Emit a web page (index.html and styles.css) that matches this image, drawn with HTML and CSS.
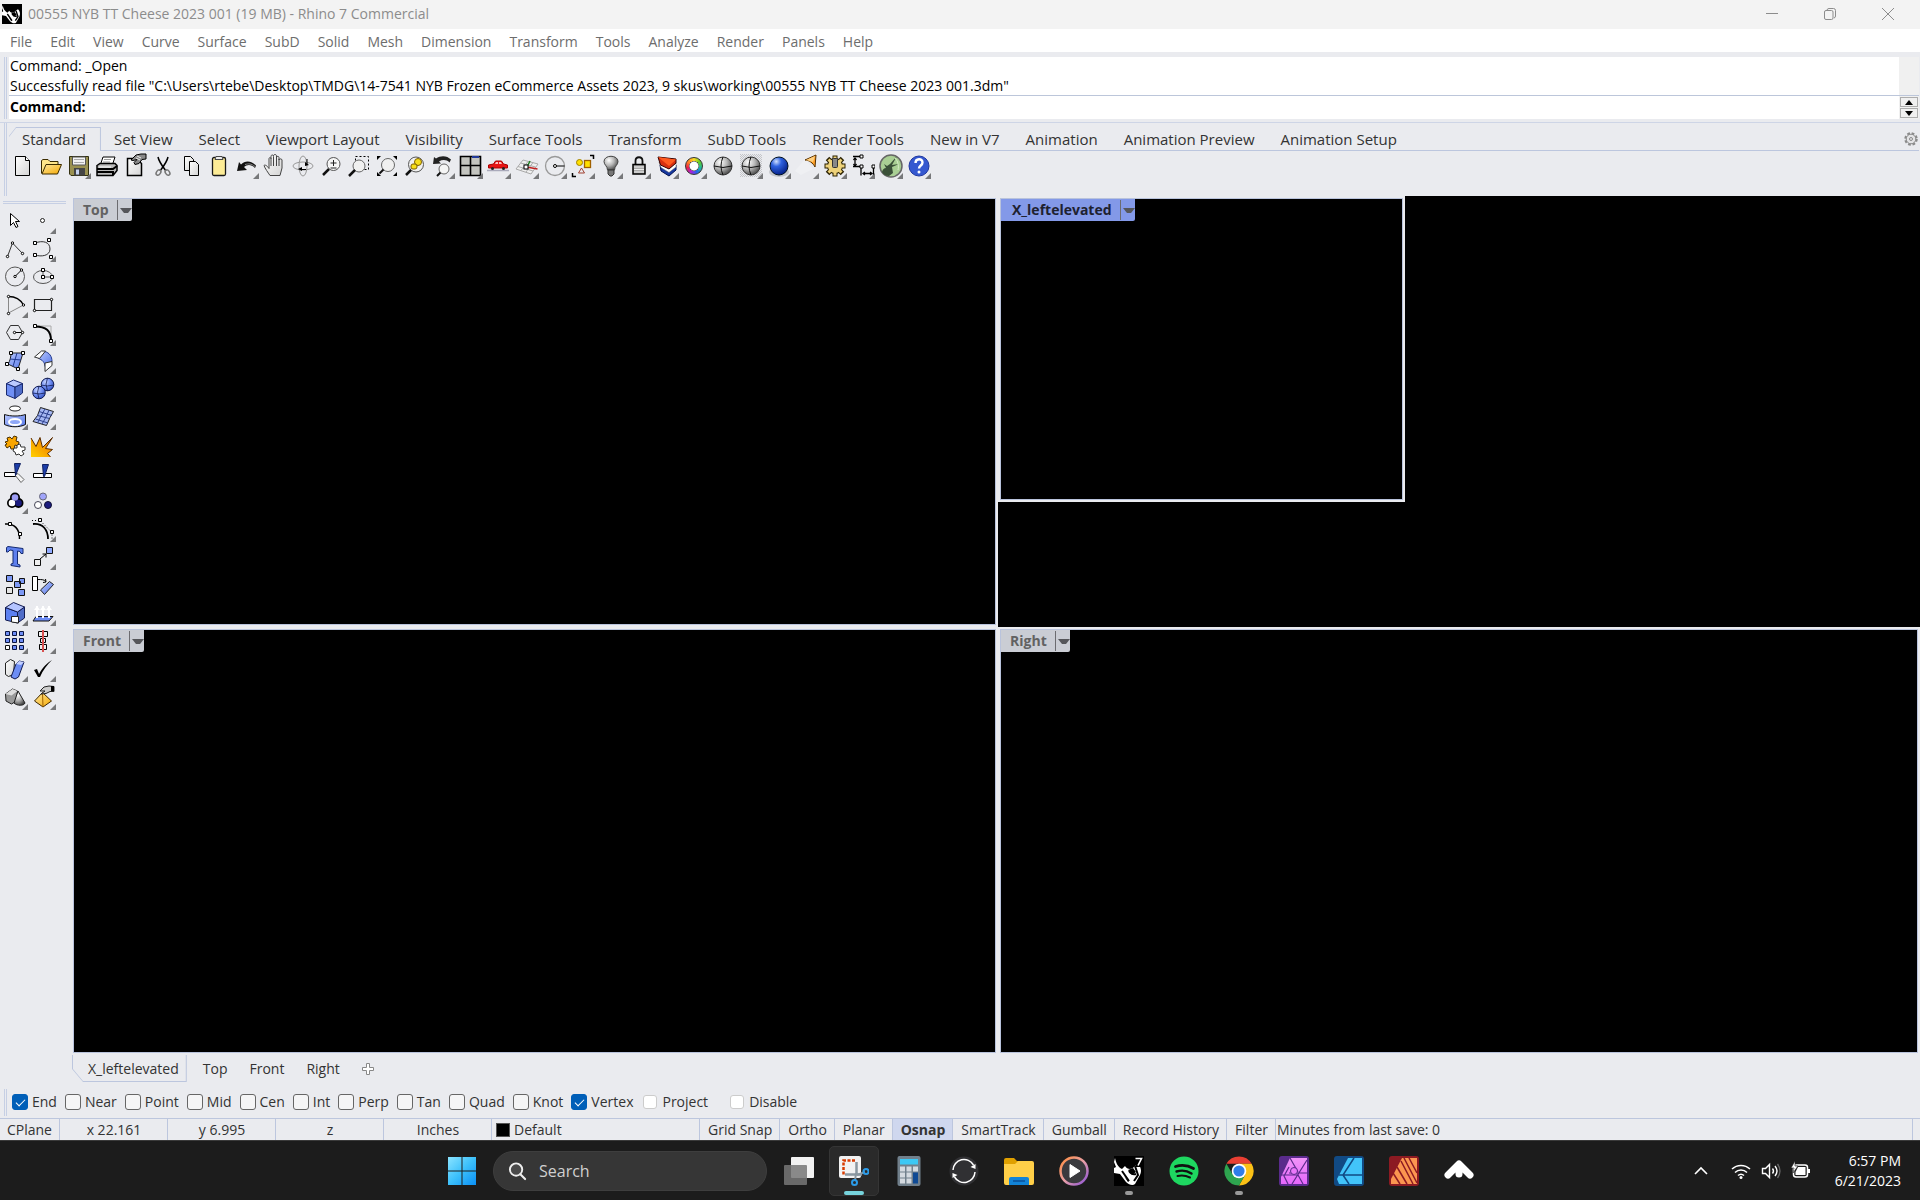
FILE: index.html
```html
<!DOCTYPE html>
<html lang="en">
<head>
    <meta charset="UTF-8">
    <meta name="viewport" content="width=device-width, initial-scale=1.0">
    <title>00555 NYB TT Cheese 2023 001 (19 MB) - Rhino 7 Commercial</title>
    <link rel="stylesheet" href="styles.css">
</head>
<body>
    <!-- shared gradients and symbols -->
    <svg class="defs" width="0" height="0" aria-hidden="true">
        <defs>
            <linearGradient id="g-paper" x1="0" y1="0" x2="1" y2="1"><stop offset="0" stop-color="#fff"/><stop offset="1" stop-color="#d4d4d4"/></linearGradient>
            <linearGradient id="g-blue" x1="0" y1="0" x2="1" y2="1"><stop offset="0" stop-color="#b9c8ff"/><stop offset="1" stop-color="#5577e8"/></linearGradient>
            <linearGradient id="g-gold" x1="0" y1="0" x2="1" y2="1"><stop offset="0" stop-color="#ffe9a0"/><stop offset="1" stop-color="#f5a800"/></linearGradient>
            <linearGradient id="g-fire" x1="0" y1="1" x2="1" y2="0"><stop offset="0" stop-color="#ffd000"/><stop offset="1" stop-color="#f07000"/></linearGradient>
            <radialGradient id="g-grey" cx=".35" cy=".3" r=".75"><stop offset="0" stop-color="#fff"/><stop offset=".5" stop-color="#b5b5b5"/><stop offset="1" stop-color="#444"/></radialGradient>
            <radialGradient id="g-ball" cx=".35" cy=".25" r=".8"><stop offset="0" stop-color="#cfe0ff"/><stop offset=".35" stop-color="#2f62e0"/><stop offset="1" stop-color="#001a80"/></radialGradient>
            <radialGradient id="g-sph" cx=".35" cy=".3" r=".8"><stop offset="0" stop-color="#c4d2ff"/><stop offset=".5" stop-color="#6f8df2"/><stop offset="1" stop-color="#2a48b8"/></radialGradient>
            <linearGradient id="g-win" x1="0" y1="0" x2="1" y2="1"><stop offset="0" stop-color="#8be4ff"/><stop offset=".5" stop-color="#3cc0fb"/><stop offset="1" stop-color="#0a8ff5"/></linearGradient>
            <linearGradient id="g-ring" x1="0" y1="0" x2="1" y2="1"><stop offset="0" stop-color="#ff8c3a"/><stop offset=".5" stop-color="#e8a0a8"/><stop offset="1" stop-color="#8a50d8"/></linearGradient>
            <linearGradient id="g-pink" x1="0" y1="0" x2="0" y2="1"><stop offset="0" stop-color="#f094f8"/><stop offset="1" stop-color="#e667fb"/></linearGradient>
            <pattern id="p-dots" width="2" height="2" patternUnits="userSpaceOnUse"><path d="M0 0h1v1H0zM1 1h1v1H1z" fill="#c4c5c9"/></pattern>
            <symbol id="rhino" viewBox="0 0 30 30">
                <path d="M0 0h30v30H0z" fill="#000"/>
                <path d="M1 2c1 5 3 9 7 11l3-3c1 2 3 3 5 3 3 0 4-3 8-5 3 3 4 7 2 11l-5 9c-2 2-6 1-9-2L6 18 0 17v-5l2-1-2-5z" fill="#fff"/>
                <path d="M8 15l7 10M15 15c2 3 4 4 7 3M21 10l3 9-4 6" fill="none" stroke="#000" stroke-width="2"/>
                <path d="M14 14l5-2 3 4-4 3zM10 20l5 5-1 1z" fill="#000"/>
            </symbol>
        </defs>
    </svg>

    <header class="titlebar">
        <svg class="app-icon" viewBox="0 0 30 30"><use href="#rhino"/></svg>
        <span class="title">00555 NYB TT Cheese 2023 001 (19 MB) - Rhino 7 Commercial</span>
        <div class="window-buttons">
            <button aria-label="Minimize"><svg viewBox="0 0 14 14"><path d="M1 6.500h12"/></svg></button>
            <button aria-label="Restore"><svg viewBox="0 0 14 14"><rect x="1.500" y="3.500" width="8.500" height="9" rx="1.500"/><path d="M4 3.500V3a2 2 0 0 1 2-1.500h4.500a2 2 0 0 1 2 2V9a2 2 0 0 1-1.500 2"/></svg></button>
            <button aria-label="Close"><svg viewBox="0 0 14 14"><path d="M1 1l12 12M13 1L1 13"/></svg></button>
        </div>
    </header>

    <nav class="menubar">
        <button>File</button><button>Edit</button><button>View</button><button>Curve</button><button>Surface</button><button>SubD</button><button>Solid</button><button>Mesh</button><button>Dimension</button><button>Transform</button><button>Tools</button><button>Analyze</button><button>Render</button><button>Panels</button><button>Help</button>
    </nav>

    <section class="command-area">
        <div class="command-box">
            <div class="history">
                <p>Command: _Open</p>
                <p>Successfully read file "C:\Users\rtebe\Desktop\TMDG\14-7541 NYB Frozen eCommerce Assets 2023, 9 skus\working\00555 NYB TT Cheese 2023 001.3dm"</p>
            </div>
            <div class="prompt">
                <label for="command">Command:</label>
                <input type="text" id="command">
                <div class="spinner">
                    <button aria-label="Previous"><svg viewBox="0 0 8 5"><path d="M4 0l4 5H0z"/></svg></button>
                    <button aria-label="Next"><svg viewBox="0 0 8 5"><path d="M0 0h8L4 5z"/></svg></button>
                </div>
            </div>
        </div>
    </section>

    <section class="toolbar-area">
        <div class="tool-tabs">
            <button class="active"><span>Standard</span></button><button>Set View</button><button>Select</button><button>Viewport Layout</button><button>Visibility</button><button>Surface Tools</button><button>Transform</button><button>SubD Tools</button><button>Render Tools</button><button>New in V7</button><button>Animation</button><button>Animation Preview</button><button>Animation Setup</button>
            <button class="options" aria-label="Options"><svg viewBox="0 0 16 16"><circle cx="8" cy="8" r="5.500" fill="none" stroke="#8a8a8a" stroke-width="2.500" stroke-dasharray="2.600 1.720"/><circle cx="8" cy="8" r="4.800" fill="#e4e4e6" stroke="#8a8a8a"/><circle cx="8" cy="8" r="1.500" fill="none" stroke="#8a8a8a"/></svg></button>
        </div>
        <div class="tools">
            <button class="tool" aria-label="New"><svg viewBox="0 0 28 28"><path d="M8.500 5.500h10l4 4v15h-14z" fill="url(#g-paper)" stroke="#000"/><path d="M18.500 5.500v4h4" fill="#fff" stroke="#000"/></svg></button>
            <button class="tool" aria-label="Open"><svg viewBox="0 0 28 28"><path d="M6.500 22.500v-13l1.500-1h5l2 2h8v3" fill="#ffe68a" stroke="#3a2a00"/><path d="M7 23l4-9.500h15.500l-4 9.500z" fill="url(#g-gold)" stroke="#3a2a00"/></svg></button>
            <button class="tool more" aria-label="Save"><svg viewBox="0 0 28 28"><path d="M6.500 5.500h19v19H8l-1.500-1.500z" fill="#9a9150" stroke="#333010"/><path d="M9.500 6h13v8h-13z" fill="#f2f2f2" stroke="#555"/><path d="M11 8.500h10M11 11.500h10" stroke="#aaa"/><path d="M11 17h11v7.500H11z" fill="#444"/><path d="M13 18.500h3v5h-3z" fill="#c8d4f0"/></svg></button>
            <button class="tool" aria-label="Print"><svg viewBox="0 0 28 28"><path d="M12 6h12l-3 9H9z" fill="#fff" stroke="#000"/><path d="M13 8.500h7M12 11h7" stroke="#999"/><path d="M6 14.500l3-2h15l2 2v5l-4 5H6z" fill="#bbb" stroke="#000" stroke-width="1.500"/><path d="M6 18h16l4-3M6 21h16v3" fill="none" stroke="#000" stroke-width="2"/><path d="M8 16h12" stroke="#fff"/></svg></button>
            <button class="tool" aria-label="Document properties"><svg viewBox="0 0 28 28"><path d="M8.500 7.500h9l5 5v12h-14z" fill="url(#g-paper)" stroke="#000" stroke-width="1.500"/><path d="M12 9l5-5 5-1h5v5l-4 .5-3 4-4 1-1-2 3-3-4 1z" fill="#888" stroke="#000"/><path d="M18 5l4 2M17 7l4 2" stroke="#eee"/></svg></button>
            <button class="tool" aria-label="Cut"><svg viewBox="0 0 28 28"><path d="M11 6c1 5 5 10 8 14M21 6c-1 5-5 10-8 14" fill="none" stroke="#000" stroke-width="1.500"/><ellipse cx="11.500" cy="21.500" rx="2" ry="3" transform="rotate(35 11.500 21.500)" fill="none" stroke="#777" stroke-width="1.500"/><ellipse cx="20.500" cy="21.500" rx="2" ry="3" transform="rotate(-35 20.500 21.500)" fill="none" stroke="#777" stroke-width="1.500"/></svg></button>
            <button class="tool" aria-label="Copy"><svg viewBox="0 0 28 28"><path d="M9.500 5.500h6l3 3v11h-9z" fill="url(#g-paper)" stroke="#000"/><path d="M14.500 10.500h6l3 3v11h-9z" fill="url(#g-paper)" stroke="#000"/></svg></button>
            <button class="tool" aria-label="Paste"><svg viewBox="0 0 28 28"><rect x="9.500" y="6.500" width="13" height="18" rx="1.500" fill="#fdec96" stroke="#1a1a1a" stroke-width="1.300"/><path d="M12 8.500l1-3h6l1 3z" fill="#eee" stroke="#444"/></svg></button>
            <button class="tool more" aria-label="Undo"><svg viewBox="0 0 28 28"><path d="M6 20l2-9 2 2.500c4-4 10-4 15 1l-1 2.500c-4-4-8-3.500-11-1l3 3z" fill="#111"/><path d="M14 13.500c4-1 6-1 10 2" fill="none" stroke="#888"/></svg></button>
            <button class="tool" aria-label="Pan"><svg viewBox="0 0 28 28"><path d="M11 24.500c-2-3-5-7-6-10 1-1 3 0 5 3V8c0-2 2-2 2 0V5.500c0-2 2.500-2 2.500 0V5c0-2 3-2 3 0v1.500c0-1.500 2.500-1.500 2.500 0V9c0-1.500 3-1.500 3 0v8l-2 7.500z" fill="url(#g-paper)" stroke="#444"/><path d="M12 8v7M14.500 6v9M17.500 6v9M20 8v7" stroke="#444"/></svg></button>
            <button class="tool" aria-label="Rotate view"><svg viewBox="0 0 28 28"><g fill="none" stroke="#999"><ellipse cx="16" cy="15" rx="10" ry="4"/><ellipse cx="16" cy="15" rx="4" ry="10"/></g><path d="M11 18l4-2v4zM18 11l4 3-4 1z" fill="#000"/><path d="M15 18.500h4M20 8v5" stroke="#000"/></svg></button>
            <button class="tool" aria-label="Zoom dynamic"><svg viewBox="0 0 28 28"><circle cx="18.500" cy="13" r="6.500" fill="#f5f5f5" stroke="#555"/><path d="M14 18l-6 6" stroke="#111" stroke-width="2.500"/><path d="M15.500 12h6M18.500 9v6M15.500 17h6" stroke="#222"/></svg></button>
            <button class="tool" aria-label="Zoom window"><svg viewBox="0 0 28 28"><path d="M12.500 5.500h13v13h-13z" fill="none" stroke="#000" stroke-dasharray="2 2"/><circle cx="16" cy="15" r="6" fill="#f0f0f0" stroke="#666"/><path d="M12 19l-6 6" stroke="#111" stroke-width="2.500"/></svg></button>
            <button class="tool" aria-label="Zoom extents"><svg viewBox="0 0 28 28"><circle cx="17" cy="14" r="6.500" fill="#f0f0f0" stroke="#666"/><path d="M12.500 18.500l-4 4" stroke="#111" stroke-width="2"/><path d="M6 5h4l-4 4zM26 5h-4l4 4zM6 25h4l-4-4zM26 25h-4l4-4z"/></svg></button>
            <button class="tool" aria-label="Zoom selected"><svg viewBox="0 0 28 28"><circle cx="17" cy="13.500" r="7.500" fill="#f0f0f0" stroke="#555"/><circle cx="19" cy="11" r="3.500" fill="#f7df1c" stroke="#806000"/><rect x="12" y="13" width="6" height="5" rx="2" fill="#f7df1c" stroke="#806000"/><path d="M12 19l-5 5" stroke="#111" stroke-width="2.500"/></svg></button>
            <button class="tool more" aria-label="Undo view change"><svg viewBox="0 0 28 28"><path d="M6 13l1-7 2 1.500c5-3.500 11-3 15 1l-1.500 3c-3-3-7-3-10.500-1l2 2z" fill="#222"/><circle cx="17" cy="18" r="5" fill="#f5f5f5" stroke="#666"/><path d="M13.500 21.500L10 25" stroke="#111" stroke-width="2"/></svg></button>
            <button class="tool more" aria-label="Four viewports"><svg viewBox="0 0 28 28"><path d="M5.500 5.500h20v19h-20zM15.500 5.500v19M5.500 14.500h20" fill="#c3c4bf" stroke="#000" stroke-width="1.600"/><path d="M17 6h7" stroke="#223a9a" stroke-width="2"/></svg></button>
            <button class="tool more" aria-label="Set view"><svg viewBox="0 0 28 28"><path d="M4 19.500h22" stroke="#aab" stroke-width="1.500"/><path d="M5.500 17v-3l5-1 2-3h6l2 3 4 1v3z" fill="#e81414" stroke="#a00"/><path d="M13 11h2v2h-3zM16 11h2l1 2h-3z" fill="#fbb"/><circle cx="9.500" cy="17.500" r="1.500" fill="#222"/><circle cx="20.500" cy="17.500" r="1.500" fill="#222"/></svg></button>
            <button class="tool more" aria-label="Set CPlane"><svg viewBox="0 0 28 28"><path d="M5 18l7-9 15 4-7 10zM7 15.500l15 4.500M9.500 12l15 4M10 19.500l7-9M15 21l7-9.500" fill="#efefef" stroke="#aaa"/><path d="M15.500 16l11 2" stroke="#c02020" stroke-width="1.500"/><path d="M16 16l3-6" stroke="#208020" stroke-width="1.500"/><rect x="13" y="14" width="4" height="4" fill="#fff" stroke="#000"/></svg></button>
            <button class="tool more" aria-label="Circle"><svg viewBox="0 0 28 28"><circle cx="16" cy="15" r="9.500" fill="none" stroke="#999" stroke-width="1.300"/><path d="M16 15h9.500" stroke="#000"/><circle cx="16" cy="15" r="1.500" fill="#fff" stroke="#000"/></svg></button>
            <button class="tool more" aria-label="Object snap"><svg viewBox="0 0 28 28"><circle cx="12.500" cy="11.500" r="3" fill="#ffe000" stroke="#a08000"/><rect x="17.500" y="9.500" width="6" height="7" fill="#ffe000" stroke="#a06000" stroke-width="1.300"/><path d="M14.500 17l3 5h-6z" fill="none" stroke="#a04030"/><path d="M23 4.500h3.500V8M5.500 22v3.500H9" fill="none" stroke="#000" stroke-width="1.500"/></svg></button>
            <button class="tool more" aria-label="Lights"><svg viewBox="0 0 28 28"><path d="M12.500 19c0-4-3.500-5-3.500-8.500 0-7 14-7 14 0 0 3.500-3.500 4.500-3.500 8.500z" fill="url(#g-grey)" stroke="#444"/><path d="M13 19h6v4l-2 2h-2l-2-2z" fill="#777" stroke="#333"/></svg></button>
            <button class="tool more" aria-label="Lock"><svg viewBox="0 0 28 28"><path d="M12.500 14v-4c0-5 7-5 7 0v4" fill="none" stroke="#111" stroke-width="1.800"/><rect x="10" y="13.500" width="12" height="9.500" fill="#aaa" stroke="#000" stroke-width="1.500"/><path d="M11 16h10M11 18.500h10M11 21h10" stroke="#eee"/></svg></button>
            <button class="tool more" aria-label="Layers"><svg viewBox="0 0 28 28"><path d="M9 14l10 5 6-5v5l-7 6-8-5z" fill="#1638a0" stroke="#001050"/><path d="M8 11l11 6 6-5v4l-7 5.500-8-5z" fill="#fff" stroke="#666" stroke-width=".5"/><path d="M7 6l2.500 8 8.500 4 7-6V8z" fill="#d83010" stroke="#300"/><path d="M7 6l18 2.500-7 6.500z" fill="#ff5a20"/></svg></button>
            <button class="tool more" aria-label="Object properties"><span class="color-wheel"></span></button>
            <button class="tool" aria-label="Shade"><svg viewBox="0 0 28 28"><circle cx="16" cy="15" r="9" fill="url(#g-grey)" stroke="#333"/><path d="M7 15q9 3 18 0M16 6q-4 9 0 18" fill="none" stroke="#111"/></svg></button>
            <button class="tool more" aria-label="Shaded viewport"><svg viewBox="0 0 28 28"><path d="M5 3h22v23H5z" fill="url(#p-dots)"/><circle cx="16" cy="15" r="9" fill="url(#g-grey)" stroke="#333"/><path d="M7 15q9 3 18 0M16 6q-4 9 0 18" fill="none" stroke="#111"/></svg></button>
            <button class="tool more" aria-label="Render"><svg viewBox="0 0 28 28"><ellipse cx="16" cy="21" rx="10" ry="5" fill="#c4c6cc"/><circle cx="16" cy="15" r="9" fill="url(#g-ball)" stroke="#012"/></svg></button>
            <button class="tool more" aria-label="Spotlight"><svg viewBox="0 0 28 28"><path d="M4 20l10-12 8 10-12 6z" fill="#eff0f3"/><path d="M14 9l11-5-1 12c-2-4-6-7-10-7z" fill="#ffa028" stroke="#553000"/><path d="M15 9l9-4-2 6z" fill="#ffd080"/></svg></button>
            <button class="tool more" aria-label="Options"><svg viewBox="0 0 28 28"><path d="M16 4.500v21M5.500 15h21M8.500 7.500l15 15M23.500 7.500l-15 15" stroke="#2a2000" stroke-width="5"/><circle cx="16" cy="15" r="8" fill="#2a2000"/><path d="M16 5.500v19M6.500 15h19M9.500 8.500l13 13M22.500 8.500l-13 13" stroke="#eed27a" stroke-width="3"/><circle cx="16" cy="15" r="7" fill="#eed27a"/><rect x="13.500" y="7.500" width="5" height="9" rx="1" fill="#888" stroke="#333"/></svg></button>
            <button class="tool more" aria-label="Dimensions"><svg viewBox="0 0 28 28"><g fill="none" stroke="#000" stroke-width="1.300"><path d="M6 5.500h8M8 8v6M6 15.500h8v9M26.500 16v9M17 22.500h7"/><path d="M6.500 9L8 7l1.500 2M6.500 13L8 15l1.500-2M18 21l-2 1.500 2 1.500M23 21l2 1.500-2 1.500"/></g><path d="M13 4h3v3h-3zM13 14h3v3h-3zM25 14h3v3h-3z" fill="#fff" stroke="#000"/></svg></button>
            <button class="tool more" aria-label="Grasshopper"><svg viewBox="0 0 28 28"><circle cx="16" cy="15" r="11" fill="#a9cf94" stroke="#666" stroke-width="1.500"/><path d="M7 21c1-3 2-4 4-4l-2-4 3 2 3-2 7-8-5 9 7-1-7 3 1 6-4 3c-4 0-6-2-7-4z" fill="#3a5038"/><path d="M20 7c3 3 4 8 3 12" fill="none" stroke="#d8f0c8"/></svg></button>
            <button class="tool more" aria-label="Help"><svg viewBox="0 0 28 28"><circle cx="16" cy="15" r="10" fill="#3558d0" stroke="#2038a0"/><path d="M12.500 12c0-5 7-5 7-.5 0 3-3.500 3-3.500 6" fill="none" stroke="#fff" stroke-width="2.400"/><circle cx="16" cy="21" r="1.500" fill="#fff"/></svg></button>
        </div>
    </section>

    <main class="workspace">
        <aside class="sidebar">
            <button class="tool" aria-label="Select"><svg viewBox="0 0 28 28"><path d="M10.500 7.500v12l3-3 2.500 5 2-1-2.500-5h4z" fill="#fff" stroke="#000"/></svg></button>
            <button class="tool more" aria-label="Point"><svg viewBox="0 0 28 28"><circle cx="14.500" cy="14.500" r="2" fill="#fff" stroke="#222"/></svg></button>

            <button class="tool more" aria-label="Polyline"><svg viewBox="0 0 28 28"><path d="M7.500 22.500l5-13.500 10 10.500" fill="none" stroke="#333"/><g fill="#fff" stroke="#000"><circle cx="7.500" cy="22.500" r="1.200"/><circle cx="12.500" cy="9" r="1.200"/><circle cx="22.500" cy="19.500" r="1.200"/></g></svg></button>
            <button class="tool more" aria-label="Control point curve"><svg viewBox="0 0 28 28"><path d="M7 9c8-3 15-1 15 6s-9 8-15 6" fill="none" stroke="#333"/><path d="M5.500 7.500h3v3h-3zM19.500 4.500h3v3h-3zM5.500 19.500h3v3h-3zM21.500 21.500h3v3h-3z" fill="#fff" stroke="#000"/></svg></button>

            <button class="tool more" aria-label="Circle"><svg viewBox="0 0 28 28"><circle cx="15" cy="14.500" r="9.500" fill="none" stroke="#555"/><path d="M15 14.500l6.500-6.500" stroke="#000"/><g fill="#fff" stroke="#000"><circle cx="15" cy="14.500" r="1.200"/><circle cx="21.500" cy="8" r="1.200"/></g></svg></button>
            <button class="tool more" aria-label="Ellipse"><svg viewBox="0 0 28 28"><ellipse cx="15" cy="15" rx="9.500" ry="6.500" fill="none" stroke="#555"/><path d="M15 8v7h9" fill="none" stroke="#555"/><path d="M13.500 6.500h3v3h-3zM13.500 13.500h3v3h-3zM22.500 13.500h3v3h-3z" fill="#fff" stroke="#000"/></svg></button>

            <button class="tool more" aria-label="Arc"><svg viewBox="0 0 28 28"><path d="M8.500 7v16l15-8" fill="none" stroke="#888"/><path d="M8.500 6.500c6 0 12 3 15 8.500" fill="none" stroke="#000" stroke-width="1.300"/><g fill="#fff" stroke="#000"><circle cx="8.500" cy="6.500" r="1.200"/><circle cx="23.500" cy="15" r="1.200"/><circle cx="8.500" cy="23.500" r="1.200"/></g></svg></button>
            <button class="tool more" aria-label="Rectangle"><svg viewBox="0 0 28 28"><path d="M6.500 9.500h17v11h-17z" fill="none" stroke="#222" stroke-width="1.200"/><g fill="#fff" stroke="#000"><circle cx="23.500" cy="9.500" r="1.200"/><circle cx="6.500" cy="20.500" r="1.200"/></g></svg></button>

            <button class="tool more" aria-label="Polygon"><svg viewBox="0 0 28 28"><path d="M6.500 14.500l4-7h8l4 7-4 7h-8z" fill="none" stroke="#333"/><path d="M14.500 14.500h8" stroke="#000"/><g fill="#fff" stroke="#000"><circle cx="14.500" cy="14.500" r="1.200"/><circle cx="22.500" cy="14.500" r="1.200"/></g></svg></button>
            <button class="tool more" aria-label="Fillet curves"><svg viewBox="0 0 28 28"><path d="M7 8h16v15" fill="none" stroke="#aaa"/><path d="M7 8.500c11 0 16 4 16 14.500" fill="none" stroke="#000" stroke-width="2"/><path d="M5.500 6.500h3v3h-3zM21.500 21.500h3v3h-3z" fill="#fff" stroke="#000"/></svg></button>

            <button class="tool more" aria-label="Surface from points"><svg viewBox="0 0 28 28"><path d="M11 7h12l-5 16-10-5c2-3 3-7 3-11z" fill="url(#g-blue)" stroke="#222"/><path d="M17 7l-4 13.500M10 13l11 1" stroke="#223a90"/><path d="M9.500 5.500h3v3h-3zM21.500 5.500h3v3h-3zM16.500 21.500h3v3h-3zM5.500 16.500h3v3h-3z" fill="#fff" stroke="#000"/></svg></button>
            <button class="tool more" aria-label="Fillet surface"><svg viewBox="0 0 28 28"><path d="M10.500 12.500l6-7c5 1 7.500 5 7.500 10l-7 5c0-4-3-7-6.500-8z" fill="url(#g-blue)" stroke="#223a90"/><path d="M6.500 11l7-6h4l-6 7.500z" fill="#fff" stroke="#333"/><path d="M17 17l7-1.500v4l-7 6z" fill="#fff" stroke="#333"/></svg></button>

            <button class="tool more" aria-label="Box"><svg viewBox="0 0 28 28"><path d="M6.500 9.500L15 13v11.500l-8.500-3.500z" fill="#6f8ff5" stroke="#1a2a70"/><path d="M15 13l7.500-3.500v9.500L15 24.500z" fill="#4f6cc8" stroke="#1a2a70"/><path d="M6.500 9.500l7-3.500 9 3.500L15 13z" fill="#bccaff" stroke="#1a2a70"/></svg></button>
            <button class="tool more" aria-label="Sphere"><svg viewBox="0 0 28 28"><circle cx="19.500" cy="10.500" r="6.300" fill="url(#g-sph)" stroke="#101a50"/><circle cx="11" cy="18.500" r="6.300" fill="url(#g-sph)" stroke="#101a50"/><path d="M13 11q6 2 13 0M19.500 4q-3 6 0 13M5 19q6 2 12 0M11 12q-3 6 0 13" fill="none" stroke="#101a50" stroke-width=".8"/></svg></button>

            <button class="tool more" aria-label="Extrude"><svg viewBox="0 0 28 28"><ellipse cx="15" cy="6.500" rx="5.500" ry="2.500" fill="#fff" stroke="#222"/><path d="M4.500 12.500c6 2 15 2 21 0v10c-6 3-15 3-21 0z" fill="url(#g-blue)" stroke="#111"/><ellipse cx="15" cy="20" rx="6" ry="3" fill="#8fa8f8" stroke="#fff" stroke-width="2"/></svg></button>
            <button class="tool more" aria-label="Loft"><svg viewBox="0 0 28 28"><path d="M12.500 5.500l13 4-3.500 6-3.500 8-13.500-4 4.500-6z" fill="#a5b7f2" stroke="#222"/><path d="M17 7l-4 7-3.500 7M21 8l-3 7-4 7M9.500 13.500l12 3M11 9.500l13 4M7.500 17l12.500 4" fill="none" stroke="#2c3f8c"/></svg></button>

            <button class="tool" aria-label="Join"><svg viewBox="0 0 28 28"><path d="M5 12l3-1-1-3 3-1 2 2 2-3 3 1-1 4 3 1-1 4-3-1-1 4-3 0-1-3-3 2-2-3 2-1z" fill="#f9a500" stroke="#4a3000"/><path d="M14 18l3 0 0-3 3-1 1 3 4 0 0 3-3 1 2 3-3 2-2-2-3 1-1-3-2-1z" fill="#fff" stroke="#333"/></svg></button>
            <button class="tool" aria-label="Explode"><svg viewBox="0 0 28 28"><path d="M3 27V8l5 8.500 4-9 2.500 10 10-10-7 11 7 1-5 4 3 3.500z" fill="url(#g-fire)"/><path d="M3 8l5 8.500 4-9 2.500 10 10-10-7 11 7 1-5 4 3 3.500" fill="none" stroke="#5a2c00"/></svg></button>

            <button class="tool" aria-label="Trim"><svg viewBox="0 0 28 28"><path d="M4.500 14.500h11v4h-11z" fill="#fff" stroke="#000"/><path d="M15 17l3-1.500 6 6-3 3z" fill="#f4f4f4" stroke="#666"/><path d="M14.500 5.500h6l-5 12z" fill="#1c3da8" stroke="#102060"/></svg></button>
            <button class="tool" aria-label="Split"><svg viewBox="0 0 28 28"><path d="M5.500 15.500h18v4h-18z" fill="#fff" stroke="#000"/><path d="M14.500 6.500h6l-4 12h-1z" fill="#1c3da8" stroke="#102060"/></svg></button>

            <button class="tool more" aria-label="Group"><svg viewBox="0 0 28 28"><g stroke="#000" stroke-width="3"><circle cx="15" cy="11.500" r="3.500"/><circle cx="12" cy="17" r="3.500"/><circle cx="18.500" cy="17" r="3.500"/></g><circle cx="12" cy="17" r="3.300" fill="#fff"/><circle cx="18.500" cy="17" r="3.300" fill="#1c1c80"/><circle cx="15" cy="11.500" r="3.300" fill="#9c9cf4"/></svg></button>
            <button class="tool" aria-label="Ungroup"><svg viewBox="0 0 28 28"><circle cx="15" cy="10.500" r="3.500" fill="#a0a4fa" stroke="#667"/><circle cx="10" cy="19" r="3.500" fill="#fff" stroke="#445"/><circle cx="20" cy="19" r="3.500" fill="#1c1c80" stroke="#113"/></svg></button>

            <button class="tool" aria-label="Edit points"><svg viewBox="0 0 28 28"><path d="M5 10c9-1 15 5 14.500 15" fill="none" stroke="#000" stroke-width="1.500"/><path d="M8.500 8.500h3v3h-3zM18.500 18.500h3v3h-3z" fill="#fff" stroke="#000"/></svg></button>
            <button class="tool more" aria-label="Points on"><svg viewBox="0 0 28 28"><path d="M4 6.500h8l12 12v7" fill="none" stroke="#000" stroke-dasharray="1 2"/><path d="M5 10c10-1 15 6 15 15" fill="none" stroke="#000" stroke-width="1.800"/><path d="M10.500 4.500h3v3h-3zM22.500 16.500h3v3h-3z" fill="#fff" stroke="#000"/></svg></button>

            <button class="tool" aria-label="Text"><svg viewBox="0 0 28 28"><path d="M6.500 5.500l1.500-1 15 2v5l-2 0-1-2-2.500-.5V22l2.500 1v2l-9-1.500V22l2-.5V8.500l-3-.5-2 2h-1.500z" fill="#5e80ee" stroke="#152a70"/></svg></button>
            <button class="tool more" aria-label="Scale"><svg viewBox="0 0 28 28"><path d="M18.500 5.500h6v6h-6z" fill="#90aaff" stroke="#111"/><path d="M6.500 17.500h6v6h-6z" fill="#eee" stroke="#111"/><path d="M12 17l6-5M14.500 12H18v3.500" fill="none" stroke="#000"/></svg></button>

            <button class="tool" aria-label="Copy objects"><svg viewBox="0 0 28 28"><g fill="#7d99f5" stroke="#111"><path d="M6.500 5.500h6v6h-6zM19.500 8.500h5v5h-5zM14.500 11.500h6v6h-6zM18.500 19.500h6v6h-6z"/><path d="M6.500 17.500h6v6h-6z" fill="#e4e4e4"/></g></svg></button>
            <button class="tool" aria-label="Rotate"><svg viewBox="0 0 28 28"><path d="M4.500 6.500h5v14h-5z" fill="#fff" stroke="#000"/><path d="M12.500 20l9-8.500 4 3-9 10z" fill="url(#g-blue)" stroke="#222"/><path d="M10 9.500c4 0 6 0 8 2M15 12.500l3-.5-.5-3" fill="none" stroke="#000"/></svg></button>

            <button class="tool more" aria-label="Boolean"><svg viewBox="0 0 28 28"><path d="M5.500 9.500l12 4.500V25l-12-3z" fill="#5c80f0" stroke="#111a50"/><path d="M17.500 14l7-5v11l-7 5z" fill="#4f6cc8" stroke="#111a50"/><path d="M5.500 9.500l8-5 11 4.500-7 5z" fill="#b4c4ff" stroke="#111a50"/><path d="M11.500 24v-5.500h7V25z" fill="#fff" stroke="#222"/></svg></button>
            <button class="tool more" aria-label="Project to CPlane"><svg viewBox="0 0 28 28"><path d="M5 23l3-4.500h17l-4 4.500z" fill="#6d8cf4" stroke="#111"/><path d="M9 20V8M15 20V8M21 20V8" stroke="#fff" stroke-width="2"/><path d="M6 12l3-4 3 4M12 12l3-4 3 4M18 12l3-4 3 4" fill="#fff"/></svg></button>

            <button class="tool more" aria-label="Array"><svg viewBox="0 0 28 28"><path d="M5.500 5.500h4v4h-4zM12.500 5.500h4v4h-4zM19.500 5.500h4v4h-4zM5.500 12.500h4v4h-4zM12.500 12.500h4v4h-4zM19.500 12.500h4v4h-4zM12.500 19.500h4v4h-4zM19.500 19.500h4v4h-4z" fill="#6e8df5" stroke="#0a1540"/><path d="M5.500 19.500h4v4h-4z" fill="#fff" stroke="#111"/></svg></button>
            <button class="tool more" aria-label="Align"><svg viewBox="0 0 28 28"><path d="M10.500 5.500h9v5h-9zM12.500 12.500h5v4h-5zM11.500 18.500h7v5h-7z" fill="#eee" stroke="#000"/><path d="M15 4v22" stroke="#d85050" stroke-width="2"/></svg></button>

            <button class="tool more" aria-label="Shear"><svg viewBox="0 0 28 28"><path d="M5.500 9l5-3.500 4 2-1 13-5 2-3-2z" fill="url(#g-paper)" stroke="#222"/><path d="M16 10l3-3 5 1-5.500 15-3.500 2-4-2z" fill="#6d8df4" stroke="#111a50"/><path d="M16 10l3-3 5 1-3 3z" fill="#c4d0ff"/></svg></button>
            <button class="tool more" aria-label="Check"><svg viewBox="0 0 28 28"><path d="M6 16l3-1 2 5c4-7 8-11 13-14-5 5-9 10-12 17h-2z" fill="#000"/></svg></button>

            <button class="tool more" aria-label="Mesh"><svg viewBox="0 0 28 28"><path d="M5.500 12l7-5 5 2-1 10-5 3-5.500-3z" fill="#999" stroke="#222"/><path d="M5.500 12l7-5 5 2-6 4.500z" fill="#ddd"/><path d="M18 9l7 12c-1 3-8 3-11 0z" fill="url(#g-grey)" stroke="#222"/></svg></button>
            <button class="tool more" aria-label="Edit properties"><svg viewBox="0 0 28 28"><path d="M6.500 19l8-8.500 9 8.500-8.500 6z" fill="url(#g-gold)" stroke="#402800"/><path d="M14.500 10.500L15 25" stroke="#a06000"/><path d="M12 9l4-4 5-1 5 .5v5h-4l-4 2-5 .5 4-3z" fill="#ccc" stroke="#222"/><path d="M24.500 4v5" stroke="#000" stroke-width="3"/></svg></button>
        </aside>

        <div class="stage">
            <div class="viewports">
                <div class="cell">
                    <section class="viewport">
                        <h2 class="vp-label"><span>Top</span><button aria-label="Top menu"></button></h2>
                    </section>
                </div>
                <div class="cell stale">
                    <div class="floating">
                        <section class="viewport">
                            <h2 class="vp-label active"><span>X_leftelevated</span><button aria-label="X_leftelevated menu"></button></h2>
                        </section>
                    </div>
                </div>
                <div class="cell">
                    <section class="viewport">
                        <h2 class="vp-label"><span>Front</span><button aria-label="Front menu"></button></h2>
                    </section>
                </div>
                <div class="cell">
                    <section class="viewport">
                        <h2 class="vp-label"><span>Right</span><button aria-label="Right menu"></button></h2>
                    </section>
                </div>
            </div>
            <nav class="view-tabs">
                <button class="active"><span>X_leftelevated</span></button><button>Top</button><button>Front</button><button>Right</button>
                <button class="add" aria-label="New viewport"><svg viewBox="0 0 12 12"><path d="M4.500.5h3v4h4v3h-4v4h-3v-4h-4v-3h4z" fill="#fff" stroke="#888"/></svg></button>
            </nav>
        </div>
    </main>

    <form class="osnap">
        <label><input type="checkbox" checked>End</label>
        <label><input type="checkbox">Near</label>
        <label><input type="checkbox">Point</label>
        <label><input type="checkbox">Mid</label>
        <label><input type="checkbox">Cen</label>
        <label><input type="checkbox">Int</label>
        <label><input type="checkbox">Perp</label>
        <label><input type="checkbox">Tan</label>
        <label><input type="checkbox">Quad</label>
        <label><input type="checkbox">Knot</label>
        <label><input type="checkbox" checked>Vertex</label>
        <label class="plain"><input type="checkbox">Project</label>
        <label class="plain"><input type="checkbox">Disable</label>
    </form>

    <footer class="statusbar">
        <button class="cplane">CPlane</button>
        <span class="coord">x 22.161</span>
        <span class="coord">y 6.995</span>
        <span class="coord">z</span>
        <span class="coord">Inches</span>
        <button class="layer"><i></i>Default</button>
        <button>Grid Snap</button>
        <button>Ortho</button>
        <button>Planar</button>
        <button class="on">Osnap</button>
        <button>SmartTrack</button>
        <button>Gumball</button>
        <button>Record History</button>
        <button>Filter</button>
        <span class="message">Minutes from last save: 0</span>
    </footer>

    <div class="taskbar">
        <div class="apps">
            <button class="app" aria-label="Start"><svg viewBox="0 0 30 30"><path d="M1 1h13.500v13.500H1zM15.500 1H29v13.500H15.500zM1 15.500h13.500V29H1zM15.500 15.500H29V29H15.500z" fill="url(#g-win)"/></svg></button>
            <label class="search">
                <svg viewBox="0 0 20 20"><circle cx="8.500" cy="8.500" r="6.500" fill="#4a4a4a" stroke="#eee" stroke-width="2"/><path d="M13 13.500l5 5" stroke="#eee" stroke-width="2.200" stroke-linecap="round"/></svg>
                <input type="text" placeholder="Search" aria-label="Search">
            </label>
            <button class="app" aria-label="Task view"><svg viewBox="0 0 30 30"><rect x="7" y="1" width="23" height="21" rx="1" fill="#f2f2f2"/><rect x="0" y="9" width="23" height="20" rx="1" fill="#777" opacity=".85"/></svg></button>
            <button class="app open current" aria-label="Snipping Tool"><svg viewBox="0 0 30 30"><rect x="0" y="0" width="22" height="22" rx="2" fill="#f2f2f2"/><path d="M4.500 18.500V4.500h13" fill="none" stroke="#d83b01" stroke-width="2.500" stroke-dasharray="3 1.500"/><path d="M17.500 6v13M6 18.500h17" stroke="#8a97a0" stroke-width="2.500"/><path d="M17 17l-1 8M18 19l8-3" stroke="#8a97a0" stroke-width="2"/><circle cx="15.500" cy="26.500" r="2.500" fill="none" stroke="#2b9be8" stroke-width="2"/><circle cx="27" cy="15.500" r="2.500" fill="none" stroke="#2b9be8" stroke-width="2"/></svg></button>
            <button class="app" aria-label="Calculator"><svg viewBox="0 0 30 30"><rect x="3.500" width="23" height="30" rx="2" fill="#71808c"/><path d="M6 3h18v5.500H6z" fill="#3cc8f4"/><path d="M6 10.500h5v5H6zM12.500 10.500h5v5h-5zM19 10.500h5v5h-5zM6 16.500h5v5H6zM12.500 16.500h5v5h-5zM6 22.500h5v5H6zM12.500 22.500h5v5h-5z" fill="#d4dae0"/><path d="M19 16.500h5v11h-5z" fill="#0f4a94"/></svg></button>
            <button class="app" aria-label="Sync"><svg viewBox="0 0 30 30"><circle cx="15" cy="15" r="14.500" fill="#303033"/><path d="M4 14a11 11 0 0 1 20.500-5M26 16a11 11 0 0 1-20.500 5" fill="none" stroke="#fff" stroke-width="1.500"/><path d="M26.500 8v5l-5-2zM3.500 22v-5l5 2z" fill="#fff"/></svg></button>
            <button class="app" aria-label="File Explorer"><svg viewBox="0 0 30 30"><path d="M0 4q0-2 2-2h8l3 3h14v6H0z" fill="#e0a000"/><path d="M0 8h11l3-3h14q2 0 2 2v20q0 2-2 2H2q-2 0-2-2z" fill="#ffcf48"/><path d="M5 29v-6q0-2 2-2h16q2 0 2 2v6z" fill="#1284d8"/><path d="M9 25h12" stroke="#0a4f98" stroke-width="1.500"/></svg></button>
            <button class="app" aria-label="Media Player"><svg viewBox="0 0 30 30"><circle cx="15" cy="15" r="13.500" fill="#3a3a3e" stroke="url(#g-ring)" stroke-width="2.500"/><path d="M11 8.500l10 6.500-10 6.500z" fill="#fff" stroke="#fff" stroke-linejoin="round"/></svg></button>
            <button class="app open" aria-label="Rhino 7"><svg viewBox="0 0 30 30"><use href="#rhino"/><path d="M20 0h10v11h-8z"/><path d="M21.500 2.500h6l-3.500 7" fill="none" stroke="#fff" stroke-width="1.600"/></svg></button>
            <button class="app" aria-label="Spotify"><svg viewBox="0 0 30 30"><circle cx="15" cy="15" r="14.500" fill="#1ed760"/><g fill="none" stroke="#111" stroke-linecap="round"><path d="M6.500 10.500c6-2 13-1 18 2" stroke-width="2.800"/><path d="M7.500 15.500c5-1.500 10.500-1 15 2" stroke-width="2.400"/><path d="M8.500 20c4-1 8.500-.5 12.500 1.500" stroke-width="2"/></g></svg></button>
            <button class="app open" aria-label="Chrome"><svg viewBox="0 0 30 30"><path d="M2.400 7.700a14.500 14.500 0 0 1 25.200 0H15z" fill="#e93f33"/><path d="M27.600 7.700A14.500 14.500 0 0 1 15 29.500l6.300-10.900L15 7.700z" fill="#fbc116"/><path d="M15 29.500A14.500 14.500 0 0 1 2.400 7.700l6.300 10.900L15 22l6.300-3.400z" fill="#2ea44f"/><circle cx="15" cy="15" r="7.300" fill="#fff"/><circle cx="15" cy="15" r="5.600" fill="#2f7de9"/></svg></button>
            <button class="app" aria-label="Affinity Photo"><svg viewBox="0 0 30 30"><rect width="30" height="30" rx="3" fill="#5a2b8c"/><path d="M11 2h17v26H2v-7z" fill="url(#g-pink)"/><path d="M11 2l8 14M28 4L13 28M2 19h17M28 17H10M19 19l5 9M10 11l-5 9 4 8" fill="none" stroke="#5a2b8c" stroke-width="1.200"/><circle cx="15" cy="15" r="3.500" fill="#ea78fa" stroke="#5a2b8c"/></svg></button>
            <button class="app" aria-label="Affinity Designer"><svg viewBox="0 0 30 30"><rect width="30" height="30" rx="3" fill="#114a84"/><path d="M14 2h14v26H5l-2-5z" fill="#42c4fa"/><path d="M20 2L9 19h19M9 19l6 9M5 19h5" fill="none" stroke="#114a84" stroke-width="1.500"/></svg></button>
            <button class="app" aria-label="Affinity Publisher"><svg viewBox="0 0 30 30"><rect width="30" height="30" rx="3" fill="#8c1a22"/><path d="M13 2h15v26H2v-5z" fill="#fb9650"/><path d="M12 5l12 23M8 11l10 17M4 17l7 11M15 2l13 25M20 2l8 15" stroke="#8c1a22" stroke-width="1.500"/></svg></button>
            <button class="app" aria-label="Cloud app"><svg viewBox="0 0 30 30"><path d="M4 19L15 8l11 11M15 9v9" stroke="#fff" stroke-width="7" stroke-linecap="round" stroke-linejoin="round" fill="none"/></svg></button>
        </div>
        <div class="tray">
            <button class="tray-btn" aria-label="Show hidden icons"><svg viewBox="0 0 20 20"><path d="M4 13l6-6 6 6" fill="none" stroke="#fff" stroke-width="1.600"/></svg></button>
            <button class="status-icons" aria-label="Network, volume, battery">
                <svg viewBox="0 0 20 20"><g fill="none" stroke="#fff" stroke-width="1.500"><path d="M1 8a13 13 0 0 1 18 0M4 11.500a8.500 8.500 0 0 1 12 0M7 14.500a4.500 4.500 0 0 1 6 0"/></g><circle cx="10" cy="16.500" r="1.500" fill="#fff"/></svg>
                <svg viewBox="0 0 20 20"><path d="M1.500 7.500h3l4-4v13l-4-4h-3zM11.500 7.500q2 2.500 0 5M14 5q4 5 0 10" fill="none" stroke="#fff" stroke-width="1.400"/><path d="M16.500 3q5 7 0 14" fill="none" stroke="#666" stroke-width="1.300"/></svg>
                <svg viewBox="0 0 20 20"><rect x="2.500" y="4" width="14" height="12" rx="2.500" fill="none" stroke="#fff" stroke-width="1.500"/><path d="M7 6h7.500v8h-10v-3zM17 8h2v4h-2z" fill="#fff"/><path d="M4 0L0 7h3l-1 5 5-7H4z" fill="#fff" stroke="#1c1c1c" stroke-width=".6"/></svg>
            </button>
            <div class="clock"><time>6:57 PM</time><time>6/21/2023</time></div>
        </div>
    </div>
</body>
</html>
```
FILE: styles.css
```css
* {
    box-sizing: border-box;
}
body {
    display: flex;
    flex-direction: column;
    height: 100vh;
    margin: 0;
    overflow: hidden;
    background: #eaebef;
    color: #333;
    font-family: "Open Sans", "Noto Sans", sans-serif;
    font-size: 14px;
    line-height: 20px;
}
button, input {
    margin: 0;
    padding: 0;
    border: 0;
    background: none;
    color: inherit;
    font: inherit;
}
svg {
    display: block;
}
.defs {
    position: absolute;
}

/* title bar */
.titlebar {
    display: flex;
    align-items: center;
    height: 29px;
    padding: 0 3px 1px 2px;
    background: #f3f3f3;
    color: #8c8c8c;
}
.app-icon {
    width: 20px;
    height: 20px;
    margin-right: 6px;
}
.window-buttons {
    display: flex;
    margin-left: auto;
}
.window-buttons button {
    display: grid;
    place-items: center;
    width: 58px;
    height: 28px;
}
.window-buttons svg {
    width: 14px;
    height: 14px;
    fill: none;
    stroke: #8c8c8c;
}

.menubar {
    display: flex;
    gap: 18px;
    height: 23px;
    padding-left: 10px;
    background: #fff;
    color: #6d6d6d;
}
.menubar button {
    height: 26px;
}

/* command prompt */
.command-area {
    padding: 5px 1px 3px 4px;
    border-bottom: 1px solid #ced5e6;
}
.command-box {
    padding-left: 5px;
    background: linear-gradient(90deg, #c6cfe4 1px, #eaebef 1px, #eaebef 2px, #c6cfe4 2px, #c6cfe4 3px, #eaebef 3px);
}
.history {
    border-right: 20px solid #f0f0f0;
    background: #fff;
    color: #000;
    line-height: 18px;
}
.history p {
    height: 19px;
    margin: 0;
    padding: 0 1px;
}
.history p + p {
    line-height: 20px;
}
.prompt {
    display: flex;
    align-items: center;
    height: 24px;
    padding-left: 1px;
    border-top: 1px solid #bcc6da;
    background: #fff;
    color: #000;
}
.prompt label {
    padding-bottom: 2px;
    font-weight: bold;
}
.prompt input {
    flex: 1;
    outline: none;
}
.spinner {
    display: grid;
    gap: 1px;
    width: 20px;
    padding: 1px;
    background: #f0f0f0;
}
.spinner button {
    display: grid;
    place-items: center;
    height: 10px;
    border: 1px solid #adadad;
}
.spinner svg {
    width: 8px;
    height: 5px;
}

/* toolbars */
.toolbar-area {
    padding: 4px 0 17px 7px;
    background: linear-gradient(90deg, transparent 4px, #c6cfe4 4px, #c6cfe4 5px, transparent 5px, transparent 6px, #c6cfe4 6px, #c6cfe4 7px, transparent 7px);
}
.tool-tabs {
    display: flex;
    height: 24px;
    margin: 0 1px 0 2px;
    border-bottom: 1px solid #bcc6de;
    font-size: 15px;
}
.tool-tabs button {
    padding: 0 13px;
    line-height: 24px;
}
.tool-tabs .active {
    position: relative;
    height: 24px;
    padding: 0 15px 0 13px;
    background: #bcc6de;
    clip-path: polygon(7px 0, 100% 0, 100% 100%, 0 100%, 0 9px);
}
.tool-tabs .active::before,
.view-tabs .active::before {
    content: "";
    position: absolute;
    background: #eaebef;
}
.tool-tabs .active::before {
    inset: 1px 1px 0 0;
    clip-path: polygon(7px 0, 100% 0, 100% 100%, 0 100%, 0 9px);
}
.tool-tabs .active span,
.view-tabs .active span {
    position: relative;
}
.tool-tabs .options {
    width: 16px;
    margin-left: auto;
    padding: 3px 0;
}
.tools {
    display: flex;
}
.tool {
    position: relative;
    width: 28px;
    height: 28px;
}
.tool svg {
    width: 28px;
    height: 28px;
}
.more::after {
    content: "";
    position: absolute;
    right: 0;
    bottom: 0;
    width: 6px;
    height: 6px;
    background: #77787a;
    clip-path: polygon(100% 0, 100% 100%, 0 100%);
}
.color-wheel {
    display: block;
    width: 18px;
    height: 18px;
    margin: 2px 0 0 6px;
    border: 1px solid #333;
    border-radius: 50%;
    background: radial-gradient(circle, #fff 4px, #444 5px, transparent 5px), conic-gradient(#fd2, #6c2, #2b9, #26e, #a2d, #e24, #f82, #fd2);
}

/* workspace */
.workspace {
    display: flex;
    flex: 1;
    min-height: 0;
}
.sidebar {
    display: grid;
    grid-template-columns: 28px 28px;
    grid-auto-rows: 28px;
    align-content: start;
    width: 71px;
    padding-top: 10px;
    background: linear-gradient(#c6cfe4 1px, transparent 1px, transparent 2px, #c6cfe4 2px, #c6cfe4 3px, transparent 3px) 3px 5px / 63px 4px no-repeat;
}
.stage {
    display: flex;
    flex: 1;
    flex-direction: column;
}
.viewports {
    display: grid;
    flex: 1;
    grid-template-columns: 927fr 922fr;
    grid-template-rows: 431fr 428fr;
}
.cell, .floating {
    display: flex;
    padding: 2px;
}
.stale {
    padding: 0;
    background: #000;
}
.floating {
    width: 407px;
    height: 306px;
    background: #eaebef;
}
.viewport {
    flex: 1;
    border: 1px solid #b9c3dc;
    background: #000;
}
.vp-label {
    display: flex;
    align-items: center;
    width: max-content;
    height: 22px;
    margin: 0;
    padding-left: 9px;
    border-bottom-right-radius: 2px;
    background: #cacdd4;
    color: #626262;
    font-size: 14px;
}
.vp-label.active {
    padding-left: 11px;
    background: #8399e8;
    color: #1e2230;
}
.vp-label button {
    width: 15px;
    height: 20px;
    margin-left: 8px;
    border-left: 1px solid #6c6c70;
}
.vp-label button::before {
    content: "";
    display: block;
    margin-left: 2px;
    border: 4px solid transparent;
    border-top: 5px solid #55565a;
    border-bottom: 0;
}
.view-tabs {
    display: flex;
    height: 32px;
    padding: 0 0 5px 1px;
}
.view-tabs button {
    padding: 0 11px;
    line-height: 24px;
}
.view-tabs .active {
    position: relative;
    margin-right: 5px;
    padding: 0 8px 0 16px;
    background: #bcc6de;
    clip-path: polygon(0 0, 100% 0, 100% 100%, 11px 100%, 0 14px);
}
.view-tabs .active::before {
    inset: 0 1px 1px;
    clip-path: polygon(0 0, 100% 0, 100% 100%, 10px 100%, 0 14px);
}
.view-tabs svg {
    width: 12px;
    height: 12px;
}

/* object snaps */
.osnap {
    display: flex;
    gap: 8px;
    align-items: center;
    height: 32px;
    padding: 0 0 2px 12px;
    border-bottom: 1px solid #bcc6de;
    background: linear-gradient(90deg, #c6cfe4 1px, transparent 1px, transparent 2px, #c6cfe4 2px) 4px 2px / 3px 27px no-repeat;
}
.osnap label {
    display: flex;
    gap: 4px;
    align-items: center;
}
.osnap input {
    appearance: none;
    width: 16px;
    height: 16px;
    border: 1px solid #666;
    border-radius: 3px;
    background: #f5f5f6;
}
.osnap input:checked {
    border-color: #005fb8;
    background: #005fb8;
}
.osnap input:checked::before {
    content: "";
    display: block;
    width: 8px;
    height: 4px;
    margin: 4px 3px;
    border: solid #fff;
    border-width: 0 0 1px 1px;
    transform: rotate(-45deg);
}
.osnap .plain {
    gap: 5px;
    margin: 0 12px 0 2px;
}
.osnap .plain input {
    width: 14px;
    height: 14px;
    border-color: #ccc;
    background: #fff;
}

.statusbar {
    display: flex;
    height: 21px;
    line-height: 22px;
}
.statusbar > * {
    padding: 0 7px 0 8px;
    border-right: 1px solid #bcc6de;
    text-align: center;
}
.statusbar .cplane {
    width: 60px;
    padding: 0;
}
.statusbar .coord {
    width: 108px;
}
.statusbar .layer {
    display: flex;
    gap: 4px;
    align-items: center;
    width: 208px;
    padding: 0 4px;
}
.layer i {
    width: 14px;
    height: 14px;
    border: 1px solid #555;
    background: #000;
}
.statusbar .on {
    background: #cfd7ee;
    font-weight: bold;
}
.statusbar .message {
    flex: 1;
    margin-right: 7px;
    padding: 0 1px;
    text-align: left;
}

/* taskbar */
.taskbar {
    display: grid;
    grid-template-columns: 1fr auto 1fr;
    align-items: center;
    height: 60px;
    border-top: 1px solid #3a3a3a;
    background: #1c1c1c;
    color: #fff;
}
.apps {
    display: flex;
    grid-column: 2;
    align-items: center;
}
.app {
    position: relative;
    display: grid;
    place-items: center;
    width: 50px;
    height: 50px;
    margin: 0 2px 0 3px;
    border: 1px solid transparent;
    border-radius: 5px;
}
.app svg {
    width: 30px;
    height: 30px;
}
.app.current {
    border-color: #353535;
    background: #2a2a2a;
}
.app.open::after {
    content: "";
    position: absolute;
    bottom: 0;
    width: 8px;
    height: 4px;
    border-radius: 2px;
    background: #999;
}
.app.current::after {
    width: 20px;
    background: #76d3dc;
}
.search {
    display: flex;
    gap: 12px;
    align-items: center;
    width: 274px;
    height: 40px;
    margin: 0 4px;
    padding: 0 14px;
    border: 1px solid #3e3e3e;
    border-radius: 20px;
    background: #363636;
}
.search svg {
    flex: none;
    width: 19px;
    height: 20px;
}
.search input {
    width: 100%;
    outline: none;
    font-size: 16px;
}
.search input::placeholder {
    color: #d0d0d0;
    opacity: 1;
}
.tray {
    display: flex;
    align-items: center;
    justify-content: flex-end;
    padding-right: 19px;
}
.tray svg {
    width: 20px;
    height: 20px;
}
.tray-btn {
    margin-right: 20px;
}
.status-icons {
    display: flex;
    gap: 10px;
    margin-right: 24px;
}
.clock {
    display: grid;
    text-align: right;
}
```
